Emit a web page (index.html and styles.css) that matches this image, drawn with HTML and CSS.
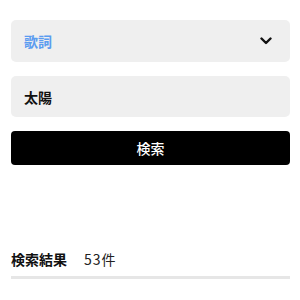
FILE: index.html
```html
<!DOCTYPE html>
<html lang="ja">
<head>
    <meta charset="UTF-8">
    <meta name="viewport" content="width=device-width, initial-scale=1.0">
    <title>検索</title>
    <link rel="stylesheet" href="styles.css">
</head>
<body>
    <div class="search-form">
        <div class="select-box">
            <span class="select-value">歌詞</span>
            <svg class="chevron" width="12" height="8" viewBox="0 0 12 8">
                <path d="M1.5 1.5 L6 6 L10.5 1.5" fill="none" stroke="#111" stroke-width="2.4" stroke-linecap="round" stroke-linejoin="round"/>
            </svg>
        </div>
        <div class="text-input">太陽</div>
        <button class="search-button">検索</button>
    </div>

    <div class="results-header">
        <span class="results-title">検索結果</span>
        <span class="results-count">53件</span>
    </div>
</body>
</html>
```

FILE: styles.css
```css
body {
    margin: 0;
    padding: 20px 10px 0 11px;
    background-color: #fff;
    font-family: "Noto Sans CJK JP", "Noto Sans", sans-serif;
    color: #111;
}

.search-form {
    display: flex;
    flex-direction: column;
}

.select-box {
    display: flex;
    align-items: center;
    justify-content: space-between;
    height: 42px;
    padding: 0 18px 0 13px;
    background-color: #efefef;
    border-radius: 5px;
}

.select-value {
    font-size: 14px;
    font-weight: bold;
    color: #5b9cf0;
}

.text-input {
    display: flex;
    align-items: center;
    height: 41px;
    margin-top: 14px;
    padding: 0 13px;
    background-color: #efefef;
    border-radius: 5px;
    font-size: 14px;
    font-weight: bold;
}

.search-button {
    height: 34px;
    margin-top: 14px;
    border: none;
    border-radius: 4px;
    background-color: #000;
    color: #fff;
    font-family: inherit;
    font-size: 14px;
    font-weight: 500;
}

.results-header {
    display: flex;
    align-items: center;
    gap: 17px;
    margin-top: 84px;
    padding-bottom: 7px;
    border-bottom: 3px solid #e6e6e6;
    font-size: 14px;
}

.results-title {
    font-weight: bold;
}

.results-count {
    color: #222;
    letter-spacing: 1px;
}
```
